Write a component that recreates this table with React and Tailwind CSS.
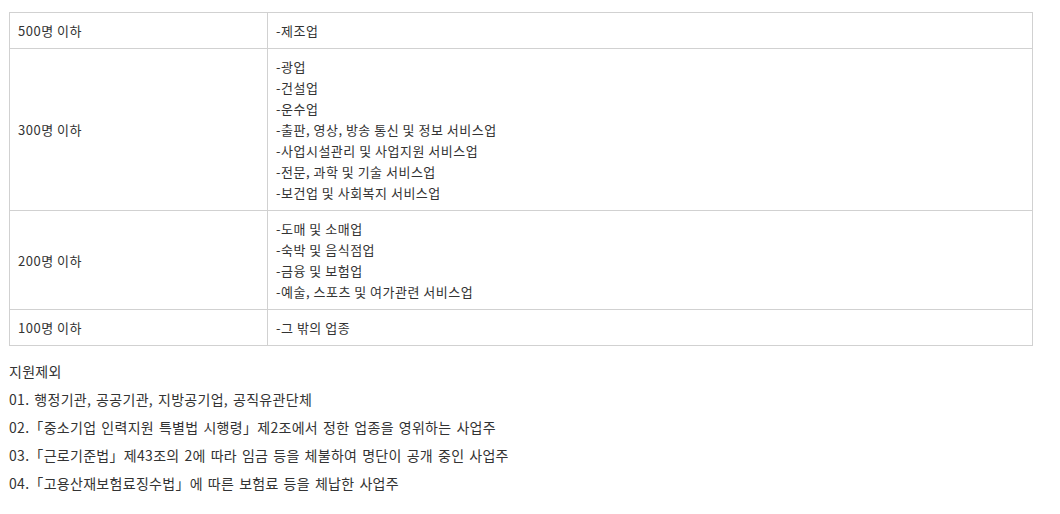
const rows = [
  { size: "500명 이하", items: ["-제조업"] },
  {
    size: "300명 이하",
    items: [
      "-광업",
      "-건설업",
      "-운수업",
      "-출판, 영상, 방송 통신 및 정보 서비스업",
      "-사업시설관리 및 사업지원 서비스업",
      "-전문, 과학 및 기술 서비스업",
      "-보건업 및 사회복지 서비스업",
    ],
  },
  {
    size: "200명 이하",
    items: ["-도매 및 소매업", "-숙박 및 음식점업", "-금융 및 보험업", "-예술, 스포츠 및 여가관련 서비스업"],
  },
  { size: "100명 이하", items: ["-그 밖의 업종"] },
];

const excluded = [
  "01. 행정기관, 공공기관, 지방공기업, 공직유관단체",
  "02.「중소기업 인력지원 특별법 시행령」제2조에서 정한 업종을 영위하는 사업주",
  "03.「근로기준법」제43조의 2에 따라 임금 등을 체불하여 명단이 공개 중인 사업주",
  "04.「고용산재보험료징수법」에 따른 보험료 등을 체납한 사업주",
];

export default function App() {
  return (
    <div
      className="bg-white px-[9px] pt-3 text-[13px] text-[#333]"
      style={{ fontFamily: '"Noto Sans CJK KR", "Noto Sans", sans-serif' }}
    >
      <table className="w-[1024px] border-collapse border border-[#d1d1d1] tracking-[0.5px]">
        <tbody>
          {rows.map((row) => (
            <tr key={row.size}>
              <td className="w-[258px] border border-[#d1d1d1] px-2 py-[7px] align-middle leading-[21px]">
                {row.size}
              </td>
              <td className="border border-[#d1d1d1] px-2 py-[7px] leading-[21px]">
                {row.items.map((item) => (
                  <div key={item}>{item}</div>
                ))}
              </td>
            </tr>
          ))}
        </tbody>
      </table>

      <div className="mt-[11px] text-[14px] leading-[28px] tracking-[0.3px] [word-spacing:1.5px]">
        <p>지원제외</p>
        {excluded.map((line) => (
          <p key={line}>{line}</p>
        ))}
      </div>
    </div>
  );
}
